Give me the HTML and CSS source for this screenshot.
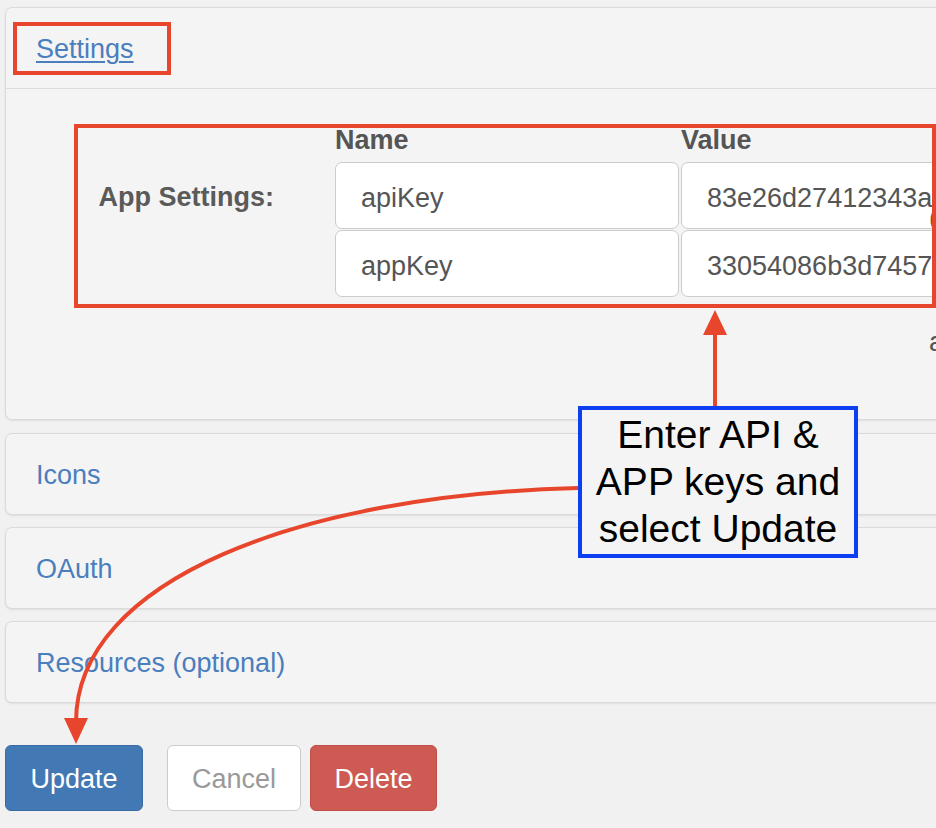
FILE: index.html
```html
<!DOCTYPE html>
<html lang="en">
<head>
<meta charset="utf-8">
<title>Settings</title>
<link rel="stylesheet" href="styles.css">
</head>
<body>
<div class="page">
  <section class="panel open">
    <div class="panel-heading"><a class="panel-title underline" href="#">Settings</a></div>
    <div class="panel-body">
      <div class="kv-grid">
        <div class="kv-head kv-name">Name</div>
        <div class="kv-head">Value</div>
        <div class="kv-label">App Settings:</div>
        <div class="field">apiKey</div>
        <div class="field field-wide">83e26d27412343a0</div>
        <div class="field">appKey</div>
        <div class="field field-wide">33054086b3d74577</div>
      </div>
    </div>
  </section>
  <section class="panel">
    <div class="panel-heading"><a class="panel-title" href="#">Icons</a></div>
  </section>
  <section class="panel">
    <div class="panel-heading"><a class="panel-title" href="#">OAuth</a></div>
  </section>
  <section class="panel">
    <div class="panel-heading"><a class="panel-title" href="#">Resources (optional)</a></div>
  </section>
  <div class="actions">
    <button class="btn btn-primary">Update</button>
    <button class="btn btn-default">Cancel</button>
    <button class="btn btn-danger">Delete</button>
  </div>
</div>

<div class="annotations">
  <span class="edge-char edge-paren">(</span>
  <span class="edge-char edge-a">a</span>
  <div class="mark mark-settings"></div>
  <div class="mark mark-app"></div>
  <svg class="arrows" width="936" height="828" viewBox="0 0 936 828">
    <line x1="715" y1="408" x2="715" y2="330" stroke="#e8462c" stroke-width="4"/>
    <polygon points="715,310 703,335 727,335" fill="#e8462c"/>
    <path d="M578,488 C300,495 76,580 76,722" fill="none" stroke="#e8462c" stroke-width="4"/>
    <polygon points="76,744 64,718 88,718" fill="#e8462c"/>
  </svg>
  <div class="callout">Enter API &amp;<br>APP keys and<br>select Update</div>
</div>
</body>
</html>
```

FILE: styles.css
```css
* { box-sizing: border-box; }

html, body {
  margin: 0;
  width: 936px;
  height: 828px;
  overflow: hidden;
}

body {
  position: relative;
  background: #f1f1f1;
  font-family: "Liberation Sans", Arial, sans-serif;
  color: #555;
}

.page {
  width: 1160px;
  padding: 7px 0 0 5px;
}

.panel {
  background: #f4f4f4;
  border: 1px solid #dadada;
  border-radius: 7px;
  box-shadow: 0 1px 2px rgba(0, 0, 0, 0.08);
  margin-bottom: 12px;
}

.panel.open {
  margin-bottom: 13px;
}

.panel-heading {
  height: 80px;
  display: flex;
  align-items: center;
  padding-left: 30px;
  padding-top: 3px;
}

.open .panel-heading {
  height: 81px;
  border-bottom: 1px solid #dcdcdc;
}

.panel-title {
  font-size: 27px;
  color: #4a7ebd;
  text-decoration: none;
}

.panel-title.underline {
  text-decoration: underline;
  text-underline-offset: 3px;
  text-decoration-thickness: 2px;
}

.panel-body {
  height: 330px;
  padding-top: 35px;
}

.kv-grid {
  display: grid;
  grid-template-columns: 327px 344px 420px;
  grid-template-rows: 37px 67px 67px;
  column-gap: 2px;
  row-gap: 1px;
}

.kv-head {
  font-size: 27px;
  font-weight: bold;
  line-height: 32px;
  color: #555;
}

.kv-name {
  grid-column: 2;
}

.kv-label {
  grid-row: 2;
  grid-column: 1;
  align-self: center;
  text-align: right;
  padding-right: 59px;
  padding-top: 4px;
  font-size: 27px;
  font-weight: bold;
  color: #5a5a5a;
}

.field {
  display: flex;
  align-items: center;
  height: 67px;
  padding-left: 25px;
  padding-top: 6px;
  background: #fff;
  border: 1px solid #cccccc;
  border-radius: 7px;
  font-size: 27px;
  color: #555;
  white-space: nowrap;
  overflow: hidden;
}

.kv-grid .field:nth-of-type(4),
.kv-grid .field:nth-of-type(6) {
  grid-column: 2;
}

.actions {
  display: flex;
  margin-top: 42px;
}

.btn {
  height: 66px;
  border-radius: 6px;
  border: 1px solid;
  font-family: "Liberation Sans", Arial, sans-serif;
  font-size: 27px;
  padding: 2px 0 0;
}

.btn-primary {
  width: 138px;
  background: #4279b5;
  border-color: #386ba3;
  color: #fff;
}

.btn-default {
  width: 134px;
  margin-left: 24px;
  background: #fff;
  border-color: #cccccc;
  color: #999;
}

.btn-danger {
  width: 127px;
  margin-left: 9px;
  background: #cd5b53;
  border-color: #c04f48;
  color: #fff;
}

/* annotation overlay */
.annotations {
  position: absolute;
  left: 0;
  top: 0;
  width: 936px;
  height: 828px;
  pointer-events: none;
}

.arrows {
  position: absolute;
  left: 0;
  top: 0;
}

.mark {
  position: absolute;
  border: 4px solid #e8462c;
}

.mark-settings {
  left: 13px;
  top: 22px;
  width: 158px;
  height: 53px;
}

.mark-app {
  left: 74px;
  top: 124px;
  width: 862px;
  height: 184px;
}

.callout {
  position: absolute;
  left: 578px;
  top: 406px;
  width: 280px;
  height: 152px;
  border: 4px solid #0d3ff2;
  background: #f4f4f4;
  padding-top: 1px;
  text-align: center;
  font-family: "Liberation Sans", Arial, sans-serif;
  font-size: 39px;
  line-height: 47px;
  color: #000;
}

.edge-char {
  position: absolute;
  left: 929px;
  font-size: 27px;
  line-height: 32px;
  color: #555;
}

.edge-paren {
  top: 202px;
}

.edge-a {
  top: 326px;
}
```
